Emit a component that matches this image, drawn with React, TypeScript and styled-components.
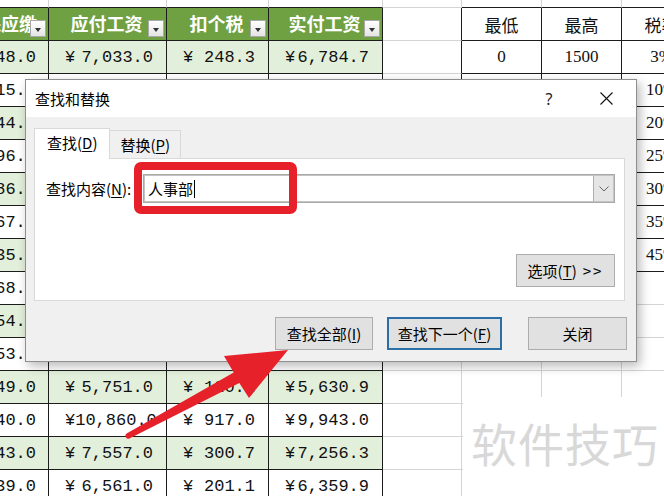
import React from 'react';
import styled, { createGlobalStyle } from 'styled-components';

const Global = createGlobalStyle`
  html, body { margin: 0; padding: 0; background: #fff; }
  body {
    width: 664px; height: 496px; overflow: hidden;
    font-family: "Noto Sans CJK SC", "Noto Sans", sans-serif;
  }
`;

const BLACK = '#1c1c1c';
const GRID = '#d4d4d4';
const HEAD_GREEN = '#6fa143';
const LIGHT_GREEN = '#e2efda';
const RED = '#e6212a';

const Sheet = styled.div`
  position: relative;
  width: 664px;
  height: 496px;
  overflow: hidden;
  background: #fff;
  display: flex;
  flex-direction: column;
`;

const SheetRow = styled.div<{ $h: number }>`
  flex: none;
  display: grid;
  grid-template-columns: 49px 118px 102px 114px 79px 80px 80px 80px;
  width: 702px;
  height: ${(p) => p.$h}px;
`;

const CellBase = styled.div<{ $r: string; $b: string; $bg?: string }>`
  box-sizing: border-box;
  min-width: 0;
  position: relative;
  overflow: hidden;
  display: flex;
  align-items: center;
  border-right: 1px solid ${(p) => p.$r};
  border-bottom: 1px solid ${(p) => p.$b};
  background: ${(p) => p.$bg ?? '#fff'};
  white-space: nowrap;
`;

const HeadCell = styled(CellBase)<{ $end?: boolean }>`
  justify-content: ${(p) => (p.$end ? 'flex-end' : 'center')};
  padding-right: ${(p) => (p.$end ? '11px' : '2px')};
  padding-bottom: 2px;
  color: #fff;
  font-weight: 700;
  font-size: 18px;
  font-family: "Noto Sans CJK SC", sans-serif;
  & > span { flex: none; }
`;

const ClipCell = styled(CellBase)`
  justify-content: flex-end;
  padding-right: 12px;
  font-family: "Liberation Mono", monospace;
  font-size: 17px;
  color: #111;
  & > span { flex: none; }
`;

const MoneyCell = styled(CellBase)`
  justify-content: space-between;
  padding: 0 13px 0 16px;
  font-family: "Liberation Mono", monospace;
  font-size: 17px;
  color: #111;
`;

const RateCell = styled(CellBase)<{ $head?: boolean }>`
  justify-content: center;
  font-family: ${(p) => (p.$head ? '"Noto Sans CJK SC", sans-serif' : '"Liberation Serif", "Noto Sans CJK SC", serif')};
  font-size: 17px;
  color: #111;
`;

const BlankCell = styled(CellBase)``;

const FilterBtn = styled.span`
  position: absolute;
  right: 2px;
  bottom: 3px;
  width: 16px;
  height: 17px;
  box-sizing: border-box;
  border: 1px solid #a8a8a8;
  background: linear-gradient(#ffffff, #e4e4e4);
  display: flex;
  align-items: center;
  justify-content: center;
  &::after {
    content: '';
    margin-top: 3px;
    border-left: 3.5px solid transparent;
    border-right: 3.5px solid transparent;
    border-top: 4px solid #333;
  }
`;

/* ---------- dialog ---------- */

const Dialog = styled.div`
  position: absolute;
  left: 25px;
  top: 79px;
  width: 612px;
  height: 283px;
  box-sizing: border-box;
  border: 1px solid #8e8e8e;
  background: #f0f0f0;
  box-shadow: 3px 4px 10px rgba(0, 0, 0, 0.28);
  display: flex;
  flex-direction: column;
  font-family: "Noto Sans CJK SC", sans-serif;
  font-size: 15px;
  color: #000;
  z-index: 2;
`;

const TitleBar = styled.div`
  flex: none;
  height: 37px;
  background: #fff;
  display: flex;
  align-items: center;
  padding-left: 9px;
`;

const Title = styled.div`
  flex: 1;
  font-size: 15px;
`;

const TitleBtn = styled.div<{ $w: number }>`
  width: ${(p) => p.$w}px;
  height: 37px;
  display: flex;
  align-items: center;
  justify-content: center;
  font-size: 16px;
  font-family: "Noto Sans", sans-serif;
  color: #222;
`;

const Body = styled.div`
  flex: 1;
  display: flex;
  flex-direction: column;
  padding: 11px 9px 11px 8px;
`;

const Tabs = styled.div`
  display: flex;
  align-items: flex-end;
  height: 30px;
  position: relative;
  z-index: 1;
`;

const Tab = styled.div<{ $active?: boolean }>`
  box-sizing: border-box;
  height: ${(p) => (p.$active ? 31 : 28)}px;
  margin-bottom: ${(p) => (p.$active ? -1 : 0)}px;
  padding: 0 ${(p) => (p.$active ? 12 : 10)}px;
  border: 1px solid #d9d9d9;
  border-bottom: none;
  ${(p) => (p.$active ? '' : 'border-left: none;')}
  background: ${(p) => (p.$active ? '#fff' : '#f0f0f0')};
  display: flex;
  align-items: center;
  padding-bottom: ${(p) => (p.$active ? 3 : 0)}px;
`;

const U = styled.span`
  text-decoration: underline;
  text-underline-offset: 2px;
  text-decoration-thickness: 1px;
`;

const Chevrons = styled.span`
  margin-left: 6px;
  letter-spacing: 2px;
`;

const Panel = styled.div`
  box-sizing: border-box;
  height: 143px;
  margin-right: 2px;
  border: 1px solid #d9d9d9;
  background: #fff;
  display: flex;
  flex-direction: column;
  padding: 15px 9px 13px 11px;
`;

const FindRow = styled.div`
  display: flex;
  align-items: center;
  height: 29px;
`;

const Label = styled.div`
  width: 97px;
  flex: none;
`;

const Combo = styled.div`
  flex: 1;
  height: 29px;
  box-sizing: border-box;
  border: 1px solid #a9a9a9;
  outline: 1px solid #c4c4c4;
  outline-offset: -2px;
  display: flex;
  background: #fff;
`;

const ComboText = styled.div`
  flex: 1;
  display: flex;
  align-items: center;
  padding-left: 4px;
  font-size: 15px;
`;

const Caret = styled.span`
  display: inline-block;
  width: 1px;
  height: 18px;
  background: #000;
  margin-left: 1px;
`;

const ComboBtn = styled.div`
  width: 20px;
  border-left: 1px solid #adadad;
  background: #e5e5e5;
  display: flex;
  align-items: center;
  justify-content: center;
`;

const PanelFoot = styled.div`
  margin-top: auto;
  display: flex;
  justify-content: flex-end;
`;

const Button = styled.div<{ $w: number; $focus?: boolean }>`
  box-sizing: border-box;
  width: ${(p) => p.$w}px;
  height: 33px;
  border: ${(p) => (p.$focus ? '2px solid #2c6ea6' : '1px solid #adadad')};
  background: #e1e1e1;
  display: flex;
  align-items: center;
  justify-content: center;
  font-size: 15px;
`;

const ButtonRow = styled.div`
  margin-top: 16px;
  display: flex;
  justify-content: flex-end;
  gap: 14px;
  & > :last-child { margin-left: 12px; }
`;

const Highlight = styled.div`
  position: absolute;
  left: 108px;
  top: 82px;
  width: 163px;
  height: 52px;
  box-sizing: border-box;
  border: 8px solid ${RED};
  border-radius: 7px;
  pointer-events: none;
`;

const ArrowLayer = styled.svg`
  position: absolute;
  left: 0;
  top: 0;
  z-index: 3;
  pointer-events: none;
`;

const Watermark = styled.div`
  position: absolute;
  left: 463px;
  top: 397px;
  width: 201px;
  height: 99px;
  background: #fff;
  display: flex;
  align-items: flex-start;
  padding: 22px 0 0 8px;
  box-sizing: border-box;
  font-family: "Noto Sans CJK SC", sans-serif;
  font-size: 46px;
  line-height: 1;
  letter-spacing: 1px;
  color: #d8d8d8;
  white-space: nowrap;
`;

/* ---------- data ---------- */

const headers = ['社保应缴', '应付工资', '扣个税', '实付工资'];

const leftRows: string[][] = [
  ['248.0', '7,033.0', '248.3', '6,784.7'],
  ['315.0', '6,315.0', '176.5', '6,138.5'],
  ['144.0', '7,144.0', '259.4', '6,884.6'],
  ['196.0', '9,196.0', '584.2', '8,611.8'],
  ['186.0', '8,186.0', '382.2', '7,803.8'],
  ['167.0', '5,167.0', '91.8', '5,075.2'],
  ['135.0', '6,135.0', '158.5', '5,976.5'],
  ['168.0', '7,168.0', '261.8', '6,906.2'],
  ['154.0', '5,854.0', '130.4', '5,723.6'],
  ['153.0', '8,653.0', '475.6', '8,177.4'],
  ['149.0', '5,751.0', '120.1', '5,630.9'],
  ['940.0', '10,860.0', '917.0', '9,943.0'],
  ['143.0', '7,557.0', '300.7', '7,256.3'],
  ['139.0', '6,561.0', '201.1', '6,359.9'],
];

const rateHead = ['最低', '最高', '税率'];
const rateRows: string[][] = [
  ['0', '1500', '3%'],
  ['1500', '4500', '10%'],
  ['4500', '9000', '20%'],
  ['9000', '35000', '25%'],
  ['35000', '55000', '30%'],
  ['55000', '80000', '35%'],
  ['80000', '', '45%'],
];

const ROWS = 16;

function rightColor(r: number, c: number) {
  if (c <= 3 && r >= 1 && r <= 15) return BLACK;
  if (c === 4 && r >= 1 && r <= 8) return BLACK;
  if (c >= 5 && r >= 1 && r <= 8) return BLACK;
  return GRID;
}

function bottomColor(r: number, c: number) {
  if (r === 0 && c !== 4) return BLACK;
  if (c <= 3 && r >= 1 && r <= 15) return BLACK;
  if (c >= 5 && r >= 1 && r <= 8) return BLACK;
  return GRID;
}

function renderCell(r: number, c: number) {
  const key = `${r}-${c}`;
  const br = rightColor(r, c);
  const bb = bottomColor(r, c);
  if (r === 1 && c <= 3) {
    return (
      <HeadCell key={key} $r={br} $b={bb} $bg={HEAD_GREEN} $end={c === 0}>
        <span>{headers[c]}</span>
        <FilterBtn />
      </HeadCell>
    );
  }
  if (r >= 2 && c <= 3) {
    const d = leftRows[r - 2];
    const bg = (r - 2) % 2 === 0 ? LIGHT_GREEN : '#fff';
    if (c === 0) {
      return (
        <ClipCell key={key} $r={br} $b={bb} $bg={bg}>
          <span>{d[0]}</span>
        </ClipCell>
      );
    }
    return (
      <MoneyCell key={key} $r={br} $b={bb} $bg={bg}>
        <span>¥</span>
        <span>{d[c]}</span>
      </MoneyCell>
    );
  }
  if (r === 1 && c >= 5) {
    return (
      <RateCell key={key} $r={br} $b={bb} $head>
        {rateHead[c - 5]}
      </RateCell>
    );
  }
  if (r >= 2 && r <= 8 && c >= 5) {
    return (
      <RateCell key={key} $r={br} $b={bb}>
        {rateRows[r - 2][c - 5]}
      </RateCell>
    );
  }
  return <BlankCell key={key} $r={br} $b={bb} />;
}

export default function App() {
  const rows = [];
  for (let r = 0; r < ROWS; r++) {
    const cells = [];
    for (let c = 0; c < 8; c++) cells.push(renderCell(r, c));
    rows.push(
      <SheetRow key={r} $h={r === 0 ? 8 : 33}>
        {cells}
      </SheetRow>
    );
  }

  return (
    <>
      <Global />
      <Sheet>
        {rows}

        <Watermark>软件技巧</Watermark>

        <Dialog>
          <TitleBar>
            <Title>查找和替换</Title>
            <TitleBtn $w={54}>?</TitleBtn>
            <TitleBtn $w={60}>
              <svg width="13" height="13" viewBox="0 0 13 13">
                <path d="M0.5 0.5 L12.5 12.5 M12.5 0.5 L0.5 12.5" stroke="#111" strokeWidth="1.1" fill="none" />
              </svg>
            </TitleBtn>
          </TitleBar>
          <Body>
            <Tabs>
              <Tab $active>
                查找(<U>D</U>)
              </Tab>
              <Tab>
                替换(<U>P</U>)
              </Tab>
            </Tabs>
            <Panel>
              <FindRow>
                <Label>
                  查找内容(<U>N</U>):
                </Label>
                <Combo>
                  <ComboText>
                    人事部
                    <Caret />
                  </ComboText>
                  <ComboBtn>
                    <svg width="10" height="6" viewBox="0 0 10 6">
                      <path d="M0.5 0.5 L5 5 L9.5 0.5" stroke="#666" strokeWidth="1" fill="none" />
                    </svg>
                  </ComboBtn>
                </Combo>
              </FindRow>
              <PanelFoot>
                <Button $w={99}>
                  选项(<U>T</U>)<Chevrons>&gt;&gt;</Chevrons>
                </Button>
              </PanelFoot>
            </Panel>
            <ButtonRow>
              <Button $w={98}>
                查找全部(<U>I</U>)
              </Button>
              <Button $w={115} $focus>
                查找下一个(<U>F</U>)
              </Button>
              <Button $w={99}>关闭</Button>
            </ButtonRow>
          </Body>
          <Highlight />
        </Dialog>

        <ArrowLayer width="664" height="496" viewBox="0 0 664 496">
          <path
            d="M126.6 433.4 L233.7 372.4 L224 356 L288 350 L249 398 L239.3 383 L129.4 438.6 A3 3 0 0 1 126.6 433.4 Z"
            fill={RED}
          />
        </ArrowLayer>
      </Sheet>
    </>
  );
}
